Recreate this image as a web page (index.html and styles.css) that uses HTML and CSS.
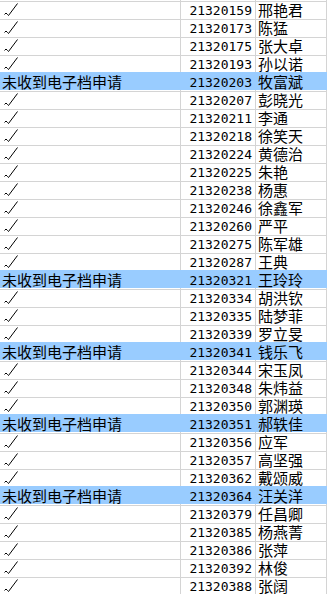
FILE: index.html
```html
<!DOCTYPE html>
<html lang="zh-CN">
<head>
<meta charset="utf-8">
<title>电子档</title>
<link rel="stylesheet" href="styles.css">
</head>
<body>
<div class="sheet" id="sheet"></div>
<script>
var rows = [
["", "21320159", "邢艳君"],
["", "21320173", "陈猛"],
["", "21320175", "张大卓"],
["", "21320193", "孙以诺"],
["未收到电子档申请", "21320203", "牧富斌"],
["", "21320207", "彭晓光"],
["", "21320211", "李通"],
["", "21320218", "徐笑天"],
["", "21320224", "黄德治"],
["", "21320225", "朱艳"],
["", "21320238", "杨惠"],
["", "21320246", "徐鑫军"],
["", "21320260", "严平"],
["", "21320275", "陈军雄"],
["", "21320287", "王典"],
["未收到电子档申请", "21320321", "王玲玲"],
["", "21320334", "胡洪钦"],
["", "21320335", "陆梦菲"],
["", "21320339", "罗立旻"],
["未收到电子档申请", "21320341", "钱乐飞"],
["", "21320344", "宋玉凤"],
["", "21320348", "朱炜益"],
["", "21320350", "郭渊瑛"],
["未收到电子档申请", "21320351", "郝轶佳"],
["", "21320356", "应军"],
["", "21320357", "高坚强"],
["", "21320362", "戴颂威"],
["未收到电子档申请", "21320364", "汪关洋"],
["", "21320379", "任昌卿"],
["", "21320385", "杨燕菁"],
["", "21320386", "张萍"],
["", "21320392", "林俊"],
["", "21320388", "张阔"]
];
var check = '<svg class="tick" width="18" height="18" viewBox="0 0 18 18"><polyline points="2.5,14.5 4,13 5.5,14.5 6.5,15.5 15.5,3.5" fill="none" stroke="#000" stroke-width="1"/></svg>';
var html = "";
rows.forEach(function (r) {
  var miss = r[0] !== "";
  html += '<div class="row' + (miss ? ' missing' : '') + '">' +
    '<div class="cell c1">' + (miss ? '<span class="txt">' + r[0] + '</span>' : check) + '</div>' +
    '<div class="cell c2"><span class="num">' + r[1] + '</span></div>' +
    '<div class="cell c3"><span class="txt">' + r[2] + '</span></div>' +
    '</div>';
});
document.getElementById("sheet").innerHTML = html;
</script>
</body>
</html>
```

FILE: styles.css
```css
html, body {
  margin: 0;
  padding: 0;
  background: #ffffff;
}
body {
  font-family: "Noto Sans CJK SC", "Noto Sans", sans-serif;
  font-size: 15px;
  color: #000;
  overflow: hidden;
}
.sheet {
  width: 327px;
}
.row {
  display: grid;
  grid-template-columns: 181px 75px 71px;
  height: 18px;
  background: linear-gradient(to bottom, transparent 1px, #d4d4d4 1px, #d4d4d4 2px, transparent 2px);
}
.row.missing {
  background: #99ccff;
}
.cell {
  height: 18px;
  border-right: 1px solid #d4d4d4;
  white-space: nowrap;
  box-sizing: border-box;
  display: flex;
  align-items: center;
}
.row.missing .cell {
  border-right-color: #99ccff;
}
.c1 {
  padding-left: 2px;
}
.c2 {
  justify-content: flex-end;
  padding-right: 3px;
}
.c3 {
  padding-left: 2px;
}
.txt {
  display: block;
  line-height: 18px;
  margin-top: 1px;
}
.num {
  display: block;
  font-family: "DejaVu Sans Mono", monospace;
  font-size: 13px;
  line-height: 14px;
  margin-top: 4px;
}
.tick {
  display: block;
  margin-top: -1px;
}
```
